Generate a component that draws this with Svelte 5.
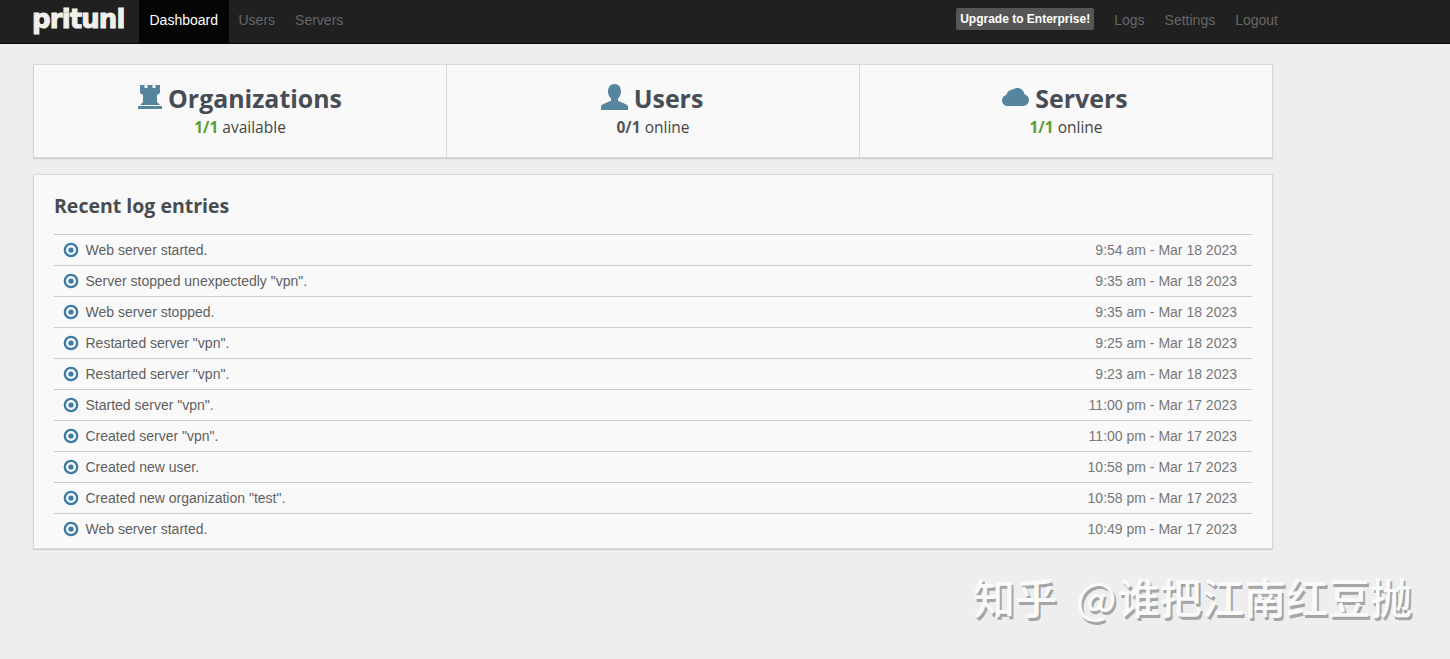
<script lang="ts">
  const stats = [
    { title: "Organizations", icon: "rook", count: "1/1", label: "available", ok: true },
    { title: "Users", icon: "user", count: "0/1", label: "online", ok: false },
    { title: "Servers", icon: "cloud", count: "1/1", label: "online", ok: true },
  ];

  const logs = [
    ["Web server started.", "9:54 am - Mar 18 2023"],
    ['Server stopped unexpectedly "vpn".', "9:35 am - Mar 18 2023"],
    ["Web server stopped.", "9:35 am - Mar 18 2023"],
    ['Restarted server "vpn".', "9:25 am - Mar 18 2023"],
    ['Restarted server "vpn".', "9:23 am - Mar 18 2023"],
    ['Started server "vpn".', "11:00 pm - Mar 17 2023"],
    ['Created server "vpn".', "11:00 pm - Mar 17 2023"],
    ["Created new user.", "10:58 pm - Mar 17 2023"],
    ['Created new organization "test".', "10:58 pm - Mar 17 2023"],
    ["Web server started.", "10:49 pm - Mar 17 2023"],
  ];
</script>

<nav class="navbar">
  <div class="nav-inner">
    <span class="brand">pritunl</span>
    <a class="nav-link active" href="#dashboard">Dashboard</a>
    <a class="nav-link" href="#users">Users</a>
    <a class="nav-link" href="#servers">Servers</a>
    <span class="spacer"></span>
    <a class="upgrade" href="#upgrade">Upgrade to Enterprise!</a>
    <a class="nav-link" href="#logs">Logs</a>
    <a class="nav-link" href="#settings">Settings</a>
    <a class="nav-link" href="#logout">Logout</a>
  </div>
</nav>

<main class="page">
  <section class="stats">
    {#each stats as s}
      <div class="stat">
        <h2>
          {#if s.icon === "rook"}
            <svg class="ico" width="24" height="24" viewBox="0 0 24 24">
              <path d="M2 0h4.500v3H9.500V0h5v3h3V0H22v8l-3 2v7l3 3H2l3-3v-7L2 8z" />
              <rect x="0" y="21" width="24" height="3" />
            </svg>
          {:else if s.icon === "user"}
            <svg class="ico" width="27" height="26" viewBox="0 0 27 26">
              <path d="M13.500 0c4 0 6.500 3 6.500 7.500 0 3-1.200 5.500-3 7v2.300c1 1 8 2.500 10 5.200V26H0v-4c2-2.700 9-4.200 10-5.200v-2.300c-1.800-1.500-3-4-3-7C7 3 9.500 0 13.500 0z" />
            </svg>
          {:else}
            <svg class="ico" width="27" height="18" viewBox="0 0 27 18">
              <path d="M6 18c-3.300 0-6-2.500-6-5.600 0-2.600 1.800-4.700 4.300-5.300C5 3.800 8 1.500 11 1.500c1.300-1 2.800-1.500 4.300-1.500 3.700 0 6.700 2.700 7.200 6.300 2.200.8 4.500 2.700 4.500 5.700 0 3.300-2.700 6-6 6z" />
            </svg>
          {/if}
          <span>{s.title}</span>
        </h2>
        <p><b class:ok={s.ok}>{s.count}</b> {s.label}</p>
      </div>
    {/each}
  </section>

  <section class="log-panel">
    <h3>Recent log entries</h3>
    <ul>
      {#each logs as [message, time]}
        <li>
          <svg width="16" height="16" viewBox="0 0 16 16">
            <circle cx="8" cy="8" r="6.200" fill="none" stroke="#3a7ca5" stroke-width="2.300" />
            <circle cx="8" cy="8" r="2.600" fill="#3a7ca5" />
          </svg>
          <span class="msg">{message}</span>
          <span class="time">{time}</span>
        </li>
      {/each}
    </ul>
  </section>

  <div class="watermark">知乎 <span class="handle">@</span>谁把江南红豆抛</div>
</main>

<style>
  :global(body) {
    margin: 0;
    background: #eee;
    font-family: "Liberation Sans", Arial, sans-serif;
  }
  .navbar {
    height: 43px;
    background: #202020;
    border-bottom: 1px solid #050505;
  }
  .nav-inner {
    width: 1288px;
    padding-left: 33px;
    box-sizing: border-box;
    display: flex;
    align-items: stretch;
    height: 43px;
  }
  .brand {
    width: 106px;
    font-family: "DejaVu Sans", sans-serif;
    font-weight: 700;
    font-size: 26px;
    letter-spacing: -0.9px;
    line-height: 38px;
    margin-left: -1px;
    padding-right: 1px;
    color: #f0f0ea;
    -webkit-text-stroke: 1px #f0f0ea;
  }
  .nav-link {
    display: flex;
    align-items: center;
    padding: 0 10px;
    font-size: 14px;
    color: #666;
    text-decoration: none;
    height: 40px;
  }
  .nav-link.active {
    background: #050505;
    color: #fff;
    padding: 0 10.500px 3px;
    height: 40px;
  }
  .spacer {
    flex: 1;
  }
  .upgrade {
    align-self: flex-start;
    margin: 8px 10px 0 0;
    height: 22px;
    line-height: 22px;
    padding: 0 4px;
    background: #555;
    border-radius: 2px;
    color: #fff;
    font-size: 12px;
    font-weight: 700;
    text-decoration: none;
  }
  .page {
    position: relative;
    padding: 20px 0 0 33px;
    height: 594px;
    box-sizing: border-box;
  }
  .stats,
  .log-panel {
    width: 1240px;
    box-sizing: border-box;
    background: #f9f9f9;
    border: 1px solid #d8d8d8;
    box-shadow: 0 1px 1px rgba(0, 0, 0, 0.12);
  }
  .stats {
    display: grid;
    grid-template-columns: 412px 413px 413px;
    height: 94px;
  }
  .stat {
    text-align: center;
    border-left: 1px solid #d8d8d8;
    color: #3f444b;
  }
  .stat:first-child {
    border-left: none;
  }
  .stat h2 {
    margin: 17px 0 0;
    display: flex;
    align-items: center;
    justify-content: center;
    gap: 6px;
    height: 32px;
    font-family: "Open Sans", sans-serif;
    font-size: 24.900px;
    font-weight: 700;
    color: #474c55;
  }
  .stat + .stat h2 {
    padding-right: 2px;
  }
  .ico {
    fill: #55859f;
    flex-shrink: 0;
    margin-top: -2px;
  }
  .stat p {
    margin: 3px 0 0;
    font-family: "Open Sans", sans-serif;
    font-size: 15.500px;
    line-height: 20px;
    color: #444;
  }
  .stat p b {
    color: #555;
  }
  .stat p b.ok {
    color: #5a9e31;
  }
  .log-panel {
    margin-top: 16px;
    height: 375px;
    padding: 0 20px;
  }
  h3 {
    margin: 0;
    padding-top: 18px;
    height: 41px;
    font-family: "Open Sans", sans-serif;
    font-size: 19.500px;
    line-height: 26px;
    font-weight: 700;
    color: #474c4f;
  }
  ul {
    list-style: none;
    margin: 0;
    padding: 0;
  }
  li {
    display: flex;
    align-items: center;
    height: 30px;
    border-top: 1px solid #ccc;
    padding: 0 15px 0 9px;
    font-size: 14px;
    color: #5f5f5f;
  }
  li svg {
    margin-right: 6.500px;
  }
  .msg {
    flex: 1;
  }
  .time {
    color: #777;
  }
  .watermark {
    position: absolute;
    left: 973px;
    top: 527px;
    font-family: "Noto Sans CJK SC", sans-serif;
    font-size: 42px;
    font-weight: 500;
    line-height: 50px;
    letter-spacing: 0.1px;
    word-spacing: 9px;
    white-space: nowrap;
    color: #fafafa;
    text-shadow: 2px 3px 0 #a5a5a5;
  }
  .handle {
    margin-right: 1px;
  }
</style>
